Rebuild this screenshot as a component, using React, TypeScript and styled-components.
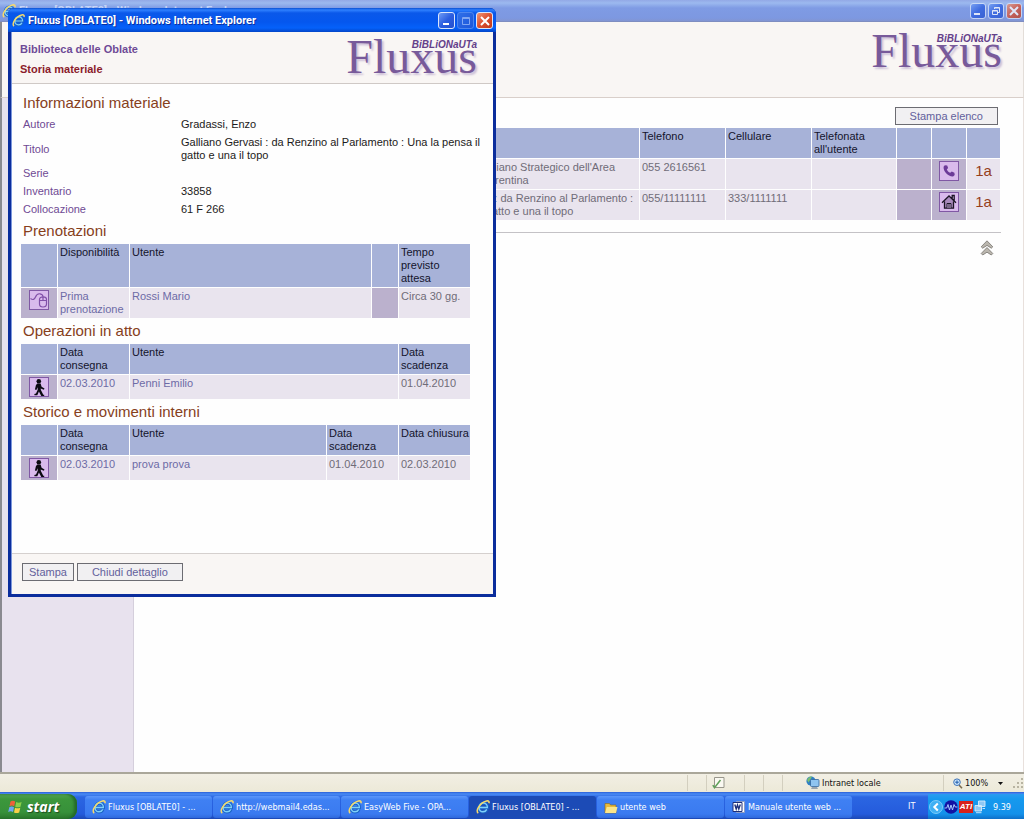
import React from 'react';
import styled, { createGlobalStyle, css } from 'styled-components';

const GlobalStyle = createGlobalStyle`
  *, *::before, *::after { box-sizing: border-box; }
  html, body { margin: 0; padding: 0; }
  body {
    font-family: "Liberation Sans", Arial, sans-serif;
    font-size: 11px;
    line-height: 13px;
    background: #fff;
    overflow: hidden;
  }
  a { color: inherit; text-decoration: none; }
  svg { display: block; flex: none; }
`;

const uiFont = '"DejaVu Sans Condensed", "DejaVu Sans", sans-serif';

/* ---------- desktop and windows ---------- */

const Desktop = styled.div`
  position: relative;
  min-height: 100vh;
  display: flex;
  flex-direction: column;
`;

const MainWindow = styled.section`
  flex: 1;
  display: flex;
  flex-direction: column;
`;

const TitleBar = styled.header<{ $active?: boolean }>`
  display: flex;
  align-items: center;
  gap: 3px;
  font-family: Roboto, "Liberation Sans", sans-serif;
  font-weight: 700;
  white-space: nowrap;
  ${(p) =>
    p.$active
      ? css`
          height: 24px;
          padding: 1px 3px 0 4px;
          color: #fff;
          border-radius: 6px 6px 0 0;
          text-shadow: 1px 1px 0 #0a2fa0;
          background: linear-gradient(#0a4fd0 0, #2f80ff 2px, #0a58ea 5px, #0557ee 14px, #0561fa 20px, #0345c8 24px);
        `
      : css`
          height: 22px;
          padding: 0 2px;
          color: #c5d3f6;
          background: linear-gradient(#93a9e6 0, #9cb9ef 3px, #7f9be4 8px, #7d98e1 18px, #8295d2 21px, #7b86b0 22px);
        `}
`;

const WindowTitle = styled.h1`
  flex: 1;
  margin: 0;
  font-size: 11px;
  line-height: 16px;
`;

const CaptionButtons = styled.div<{ $inactive?: boolean }>`
  display: flex;
  gap: 2px;
  opacity: ${(p) => (p.$inactive ? 0.75 : 1)};
`;

const CaptionButton = styled.button<{ $kind: 'blue' | 'faded' | 'red'; $size: number }>`
  width: ${(p) => p.$size}px;
  height: ${(p) => p.$size}px;
  padding: 0;
  display: flex;
  align-items: center;
  justify-content: center;
  border: 1px solid ${(p) => (p.$kind === 'faded' ? '#4d86ee' : '#dbe6fb')};
  border-radius: 3px;
  background: ${(p) =>
    ({
      blue: 'linear-gradient(135deg, #6f9bf5, #2c5ee0 50%, #2450cd)',
      faded: 'linear-gradient(135deg, #2f6fe8, #1c56da)',
      red: 'linear-gradient(135deg, #ee9576, #dc5030 50%, #c03a1c)',
    })[p.$kind]};
`;

const AppHeader = styled.div`
  display: flex;
  justify-content: flex-end;
  height: 76px;
  padding: 9px 21px 0;
  background: #f9f6f4;
  border-bottom: 1px solid #d9cfca;
  border-left: 2px solid #8a8a90;
  border-right: 1px solid #e3ddd8;
`;

const Columns = styled.div`
  flex: 1;
  display: flex;
  border-left: 2px solid #8a8a90;
  border-right: 1px solid #e8e0dc;
`;

const SideBar = styled.aside`
  width: 132px;
  flex: none;
  background: #e8e2ee;
  border-right: 1px solid #d5cfdc;
`;

const Content = styled.main`
  flex: 1;
  min-width: 0;
  padding: 9px 22px 0 8px;
  background: #fefefe;
  display: flex;
  flex-direction: column;
`;

const Actions = styled.div`
  display: flex;
  justify-content: flex-end;
  padding: 0 3px 2px;
`;

const ActionButton = styled.button<{ $wide?: boolean }>`
  height: 18px;
  padding: 0 ${(p) => (p.$wide ? 14 : 6)}px;
  border: 1px solid #6c6c72;
  background: #f1f0f2;
  color: #63619c;
  font: 11px/14px "Liberation Sans", Arial, sans-serif;
`;

const Rule = styled.hr`
  width: 100%;
  margin: 11px 0 7px;
  border: 0;
  border-top: 1px solid #c4c2c6;
`;

const TopLink = styled.a`
  align-self: flex-end;
  margin-right: 7px;
`;

/* ---------- tables ---------- */

const Grid = styled.table`
  width: 100%;
  table-layout: fixed;
  border-collapse: separate;
  border-spacing: 1px;
`;

const Head = styled.th`
  padding: 2px;
  background: #a7b2d8;
  color: #14142c;
  font-weight: 400;
  text-align: left;
  vertical-align: top;
`;

const Cell = styled.td<{ $tone?: 'grey' | 'link' | 'rank' }>`
  padding: 2px;
  background: #e9e4ee;
  vertical-align: top;
  color: ${(p) => (p.$tone === 'link' ? '#6d6ba6' : '#706c78')};
  ${(p) =>
    p.$tone === 'rank' &&
    css`
      color: #96401c;
      font-size: 15px;
      line-height: 20px;
      text-align: center;
    `}
`;

const IconCell = styled.td`
  padding: 2px;
  background: #bbb1cd;
  vertical-align: top;
  svg { margin: 0 auto; }
`;

const SectionTitle = styled.h2`
  margin: 0;
  padding-left: 3px;
  font-size: 15px;
  line-height: 24px;
  font-weight: 400;
  color: #86401c;
`;

const InfoTable = styled.table`
  width: 100%;
  border-collapse: separate;
  border-spacing: 0 1px;
  th, td { padding: 2px 3px; text-align: left; font-weight: 400; }
  th { width: 158px; color: #6f4a94; }
  td { padding-right: 0; color: #1c1a20; }
`;

/* ---------- popup ---------- */

const Popup = styled.section`
  position: absolute;
  left: 8px;
  top: 8px;
  width: 488px;
  height: 589px;
  display: flex;
  flex-direction: column;
  background: #0b2d9c;
  border-radius: 6px 6px 0 0;
`;

const PopupInner = styled.div`
  flex: 1;
  display: flex;
  flex-direction: column;
  margin: 0 3px 3px;
  border-left: 1px solid #7c98dc;
  background: #fefefe;
`;

const PopupHeader = styled.div`
  display: flex;
  justify-content: space-between;
  height: 52px;
  padding: 5px 16px 0 8px;
  background: #f9f6f4;
  border-bottom: 1px solid #cfc9c6;
`;

const Headings = styled.div`
  font-weight: 700;
  line-height: 20px;
  padding-top: 2px;
`;

const Library = styled.div`
  color: #6e4a96;
`;

const PageName = styled.div`
  color: #8b1c2c;
`;

const PopupBody = styled.div`
  flex: 1;
  padding: 7px 4px 0 8px;
`;

const Section = styled.section`
  padding-right: 18px;
`;

const PopupFooter = styled.footer`
  display: flex;
  gap: 3px;
  height: 41px;
  padding: 9px 10px;
  background: #f9f6f4;
  border-top: 1px solid #d5d0ce;
`;

const Logo = styled.div`
  position: relative;
  height: 40px;
  color: #785a9a;
  font: 48px/40px "Liberation Serif", "Times New Roman", serif;
  text-shadow: 2px 2px 2px #cdc0d8;
`;

const LogoTag = styled.span`
  position: absolute;
  right: 0;
  top: 2px;
  font: italic 700 10px/12px "Liberation Sans", Arial, sans-serif;
  color: #64408a;
  text-shadow: none;
`;

/* ---------- status bar and task bar ---------- */

const StatusBar = styled.div`
  display: flex;
  align-items: center;
  justify-content: flex-end;
  height: 20px;
  border-top: 2px solid #aaa79a;
  background: linear-gradient(#f2efe4, #ece9d8);
  color: #111;
  font: 9px/14px ${uiFont};
`;

const StatusPane = styled.div<{ $width: number; $pad?: number }>`
  display: flex;
  align-items: center;
  gap: 2px;
  width: ${(p) => p.$width}px;
  height: 16px;
  padding-left: ${(p) => p.$pad ?? 0}px;
  border-left: 1px solid #d3cfbf;
`;

const Spacer = styled.span`
  flex: 1;
`;

const TaskBar = styled.nav`
  display: flex;
  height: 27px;
  padding-top: 2px;
  background: linear-gradient(#2a5fd8 0, #4a8cf4 2px, #2b66e2 5px, #245bdc 22px, #1c48b4 27px);
  color: #fff;
  font: 9px/14px ${uiFont};
`;

const StartButton = styled.button`
  display: flex;
  align-items: center;
  gap: 4px;
  width: 77px;
  margin-right: 8px;
  padding: 0 0 0 8px;
  border: 0;
  border-radius: 0 9px 9px 0;
  color: #fff;
  font: italic 700 14px/20px "Open Sans", "Noto Sans", sans-serif;
  text-shadow: 1px 1px 1px #1e4d1e;
  background: linear-gradient(#56a556 0, #3c973c 5px, #37913a 18px, #2a762c 25px);
  box-shadow: inset -3px 0 3px #246a28;
`;

const Tasks = styled.div`
  display: flex;
  flex: 1;
  gap: 1px;
`;

const Task = styled.button<{ $active?: boolean }>`
  display: flex;
  align-items: center;
  gap: 2px;
  width: 127px;
  height: 22px;
  margin-top: 2px;
  padding: 0 0 0 7px;
  border: 0;
  border-radius: 3px;
  color: #fff;
  font: 9px/14px ${uiFont};
  white-space: nowrap;
  background: ${(p) =>
    p.$active ? '#1c4bb6' : 'linear-gradient(#5b96fa 0, #3f80f3 4px, #3a7af0 18px, #3069dc 22px)'};
`;

const Language = styled.div`
  width: 20px;
  line-height: 25px;
`;

const Tray = styled.div`
  display: flex;
  align-items: center;
  gap: 1px;
  width: 96px;
  padding: 0 0 0 1px;
  background: linear-gradient(#2a9cf0 0, #1699ee 5px, #1491ea 20px, #0f6fc8 25px);
`;

const Clock = styled.time`
  margin-left: 6px;
`;

/* ---------- drawings ---------- */

const IeIcon = ({ size = 14 }: { size?: number }) => (
  <svg width={size} height={size} viewBox="0 0 16 16" fill="none">
    <path d="M4 8.800h9c.2-3.200-1.700-5.200-4.400-5.200-2.900 0-4.900 2.300-5 5.200-.1 3 1.700 4.800 4.400 4.800 2 0 3.500-.9 4.400-2.700" stroke="#1a63c4" strokeWidth="3.600" />
    <path d="M4 8.600h9c.2-3-1.700-5-4.400-5-2.900 0-4.900 2.300-5 5.200-.1 3 1.700 4.600 4.400 4.600 2 0 3.500-.9 4.300-2.700" stroke="#7fd0fa" strokeWidth="1.500" />
    <path d="M2.600 15C-1 13 4 3.300 12 1.200c2.400-.6 3.400.5 2.700 2.500" stroke="#f6d96c" strokeWidth="1.800" />
  </svg>
);

const MinimizeGlyph = () => (
  <svg width="12" height="12" viewBox="0 0 12 12">
    <path d="M2 8h6v2H2z" fill="#fff" />
  </svg>
);

const MaximizeGlyph = () => (
  <svg width="12" height="12" viewBox="0 0 12 12" fill="none" stroke="#80a6f2">
    <path d="M2.500 2.500h7v7h-7zM2.500 3.500h7" />
  </svg>
);

const RestoreGlyph = () => (
  <svg width="12" height="12" viewBox="0 0 12 12" fill="none" stroke="#fff">
    <path d="M4.500 4V2.500h5v5H8M4.500 3h5" />
    <path d="M2.500 5.500h5v4h-5zM2.500 6h5" />
  </svg>
);

const CloseGlyph = () => (
  <svg width="12" height="12" viewBox="0 0 12 12" stroke="#fff" strokeWidth="2">
    <path d="M2 2l8 8M10 2l-8 8" />
  </svg>
);

const IconFrame = ({ children }: { children: React.ReactNode }) => (
  <svg width="20" height="20" viewBox="0 0 20 20">
    <rect x=".5" y=".5" width="19" height="19" fill="#d9baec" stroke="#8058a4" />
    {children}
  </svg>
);

const MouseIcon = () => (
  <IconFrame>
    <g fill="none" stroke="#8150a8" strokeWidth="1.200">
      <path d="M1.500 8.500c2.500 1.800 4 1 5-1.500S9 3.500 11 3.800c2 .3 3 1 3 3" />
      <path d="M10.500 9.500c0-3.600 7-3.600 7 0v4.500c0 4-7 4-7 0zM10.500 10.500h7M14 6.800v3.700" />
    </g>
  </IconFrame>
);

const WalkIcon = () => (
  <IconFrame>
    <circle cx="9.800" cy="4.300" r="2.300" fill="#0c0a12" />
    <path d="M8.200 6.600h3.400l1 3.200 2.900 1.700-.6 1.200-3.200-1.300.2 1.700 2.400 4.600h.9v1.200h-2.900l-2.400-4.400-1.600 3.800-2.800-.1-.2-1.200 1.700-.4 1.700-3.800-.1-2.600-1.200 2.800-1.500-.4 1-4.400z" fill="#0c0a12" />
  </IconFrame>
);

const PhoneIcon = () => (
  <IconFrame>
    <path d="M5.800 4.200l2.400.2.900 2.600-1.300 1.400c.7 1.500 1.700 2.600 3.400 3.400l1.600-1.200 2.600 1.100.3 2.200-1.600 1.500C9.300 15.800 4.100 10.500 4.600 5.800z" fill="#6c3a98" />
  </IconFrame>
);

const HouseIcon = () => (
  <IconFrame>
    <path d="M5 9.500L10 4.500l5 5v6.700H5z" fill="#a98abd" />
    <path d="M3 10.800L10 4l7 6.800M5.500 9.500v6.700h9V9.500M13.200 7V3.500h2V9" fill="none" stroke="#1b1424" strokeWidth="1.300" />
    <path d="M8 16v-4.500h4V16M10 11.500V16" fill="#d9baec" stroke="#1b1424" />
  </IconFrame>
);

const TopIcon = () => (
  <svg width="14" height="16" viewBox="0 0 14 16" fill="#bab6ae" stroke="#77736e" strokeWidth=".8">
    <path d="M7 .8l5.800 6-1.500 1.400L7 5.400 2.700 8.200 1.200 6.800z" />
    <path d="M7 7.500l5.800 6-1.500 1.500L7 12.200 2.700 15l-1.500-1.500z" />
  </svg>
);

const WindowsFlag = () => (
  <svg width="15" height="14" viewBox="0 0 15 14">
    <path d="M2.500 1.500Q5 0 7.200 1.600L6.200 6.300Q4 5 1.500 6.200z" fill="#f0603a" />
    <path d="M8.200 2Q10.600 3.400 13.600 2L12.500 6.700Q9.800 8 7.200 6.700z" fill="#8cd04a" />
    <path d="M1.300 7.200Q3.800 6 6 7.300L5 12Q2.800 10.600.2 12z" fill="#6fa4f4" />
    <path d="M7 7.700Q9.500 9 12.300 7.700L11.200 12.400Q8.500 13.600 6 12.400z" fill="#f8d048" />
  </svg>
);

const FolderIcon = () => (
  <svg width="14" height="13" viewBox="0 0 14 13">
    <path d="M1 2.500h4.500l1 1.500H12v8H1z" fill="#e8b93c" stroke="#8a6a18" strokeWidth=".6" />
    <path d="M1 12l1.800-6h10.700L12 12z" fill="#fbe58a" />
  </svg>
);

const WordIcon = () => (
  <svg width="14" height="14" viewBox="0 0 14 14" fill="none">
    <path d="M4.500 1.500h8v11h-8z" fill="#fff" stroke="#8b9bc4" />
    <path d="M1 2.500h9v9H1z" fill="#fff" stroke="#1e2f7a" />
    <path d="M2.800 4.500L4.200 9l1.300-4 1.300 4 1.500-4.500" stroke="#1e2f7a" strokeWidth="1.400" />
  </svg>
);

const PageCheckIcon = () => (
  <svg width="13" height="12" viewBox="0 0 13 12" fill="none">
    <path d="M2.500.5h9.500v10H2.500z" fill="#faf9f2" stroke="#98968c" />
    <path d="M.8 8.200l1.700 2.500L8.500 3" stroke="#5fa05a" strokeWidth="1.500" />
  </svg>
);

const IntranetIcon = () => (
  <svg width="14" height="14" viewBox="0 0 14 14">
    <circle cx="5" cy="5" r="4.600" fill="#2f7fc4" />
    <path d="M1 4q2-4 5-3.500Q5 3 2.500 6.500z" fill="#79c070" />
    <rect x="4.500" y="3.500" width="8.500" height="7" rx="1" fill="#8fc4f0" stroke="#33669c" strokeWidth=".8" />
    <path d="M6 11h5l1 2H5z" fill="#9aa5ae" />
  </svg>
);

const MagnifierIcon = () => (
  <svg width="10" height="11" viewBox="0 0 10 11" fill="none">
    <path d="M6 7l3 3.300" stroke="#7b6a4c" strokeWidth="1.600" />
    <circle cx="4" cy="4.200" r="3.300" fill="#cfe6fb" stroke="#3c72b8" />
    <path d="M2.200 4.200h3.600M4 2.400V6" stroke="#1d5cac" />
  </svg>
);

const ArrowDown = () => (
  <svg width="5" height="3" viewBox="0 0 5 3">
    <path d="M0 0h5L2.500 3z" fill="#111" />
  </svg>
);

const GripIcon = () => (
  <svg width="11" height="11" viewBox="0 0 11 11" fill="#b8b4a2">
    <path d="M8 0h2v2H8zM8 4h2v2H8zM8 8h2v2H8zM4 4h2v2H4zM4 8h2v2H4zM0 8h2v2H0z" />
  </svg>
);

const ChevronIcon = () => (
  <svg width="14" height="16" viewBox="0 0 14 16" fill="none">
    <circle cx="7" cy="8" r="6.500" fill="#3fb0f4" stroke="#8fd6fb" strokeWidth=".8" />
    <path d="M8.800 4.500L5.300 8l3.500 3.500" stroke="#fff" strokeWidth="2" />
  </svg>
);

const WaveIcon = () => (
  <svg width="14" height="14" viewBox="0 0 14 14" fill="none">
    <circle cx="7" cy="7" r="6.800" fill="#1212a4" />
    <path d="M.5 8h2.200L4 4.500 5.500 10 7 5l1.500 5L10 4.500 11.300 7h2.200" stroke="#a6c8ff" />
  </svg>
);

const AtiBadge = styled.span`
  width: 14px;
  height: 12px;
  background: #d8221c;
  color: #fff;
  font: italic 700 8px/12px "Liberation Sans", Arial, sans-serif;
  text-align: center;
`;

const NetworkIcon = () => (
  <svg width="12" height="14" viewBox="0 0 12 14" fill="#8fc8f4" stroke="#d8ecfb" strokeWidth=".9">
    <path d="M4.500 1h6.500v5.500H4.500zM1 5.500h6.500V11H1z" />
    <path d="M2 12.700h5.500M8.500 8.500H11" />
  </svg>
);

/* ---------- composed parts ---------- */

const Brand = () => (
  <Logo>
    Fluxus
    <LogoTag>BiBLiONaUTa</LogoTag>
  </Logo>
);

const WINDOW_TITLE = 'Fluxus [OBLATE0] - Windows Internet Explorer';

const requests = [
  { title: "Relazione per il Piano Strategico dell'Area Metropolitana Fiorentina", phone: '055 2616561', mobile: '', icon: <PhoneIcon /> },
  { title: 'Galliano Gervasi : da Renzino al Parlamento : Una la pensa il gatto e una il topo', phone: '055/11111111', mobile: '333/1111111', icon: <HouseIcon /> },
];

const details = [
  ['Autore', 'Gradassi, Enzo'],
  ['Titolo', 'Galliano Gervasi : da Renzino al Parlamento : Una la pensa il gatto e una il topo'],
  ['Serie', ''],
  ['Inventario', '33858'],
  ['Collocazione', '61 F 266'],
];

const tasks = [
  { label: 'Fluxus [OBLATE0] - ...', icon: <IeIcon /> },
  { label: 'http://webmail4.edas...', icon: <IeIcon /> },
  { label: 'EasyWeb Five - OPA...', icon: <IeIcon /> },
  { label: 'Fluxus [OBLATE0] - ...', icon: <IeIcon />, active: true },
  { label: 'utente web', icon: <FolderIcon /> },
  { label: 'Manuale utente web ...', icon: <WordIcon /> },
];

const Cols = ({ widths }: { widths: (number | undefined)[] }) => (
  <colgroup>
    {widths.map((w, i) => (
      <col key={i} width={w} />
    ))}
  </colgroup>
);

const HeadRow = ({ labels }: { labels: string[] }) => (
  <thead>
    <tr>
      {labels.map((label, i) => (
        <Head key={i} scope="col">{label}</Head>
      ))}
    </tr>
  </thead>
);

const RequestList = () => (
  <Grid>
    <Cols widths={[undefined, 231, 85, 85, 84, 34, 34, 33]} />
    <HeadRow labels={['', '', 'Telefono', 'Cellulare', "Telefonata all'utente", '', '', '']} />
    <tbody>
      {requests.map((r) => (
        <tr key={r.phone}>
          <Cell />
          <Cell>{r.title}</Cell>
          <Cell>{r.phone}</Cell>
          <Cell>{r.mobile}</Cell>
          <Cell />
          <IconCell />
          <IconCell>{r.icon}</IconCell>
          <Cell $tone="rank">1a</Cell>
        </tr>
      ))}
    </tbody>
  </Grid>
);

const DetailWindow = () => (
  <Popup>
    <TitleBar $active>
      <IeIcon size={13} />
      <WindowTitle>{WINDOW_TITLE}</WindowTitle>
      <CaptionButtons>
        <CaptionButton $kind="blue" $size={17} aria-label="Riduci a icona"><MinimizeGlyph /></CaptionButton>
        <CaptionButton $kind="faded" $size={17} aria-label="Ingrandisci"><MaximizeGlyph /></CaptionButton>
        <CaptionButton $kind="red" $size={17} aria-label="Chiudi"><CloseGlyph /></CaptionButton>
      </CaptionButtons>
    </TitleBar>
    <PopupInner>
      <PopupHeader>
        <Headings>
          <Library>Biblioteca delle Oblate</Library>
          <PageName>Storia materiale</PageName>
        </Headings>
        <Brand />
      </PopupHeader>
      <PopupBody>
        <SectionTitle>Informazioni materiale</SectionTitle>
        <InfoTable>
          <tbody>
            {details.map(([name, value]) => (
              <tr key={name}>
                <th scope="row">{name}</th>
                <td>{value}</td>
              </tr>
            ))}
          </tbody>
        </InfoTable>
        <Section>
          <SectionTitle>Prenotazioni</SectionTitle>
          <Grid>
            <Cols widths={[36, 71, undefined, 26, 71]} />
            <HeadRow labels={['', 'Disponibilità', 'Utente', '', 'Tempo previsto attesa']} />
            <tbody>
              <tr>
                <IconCell><MouseIcon /></IconCell>
                <Cell $tone="link"><a href="#prenotazione">Prima prenotazione</a></Cell>
                <Cell $tone="link"><a href="#rossi">Rossi Mario</a></Cell>
                <IconCell />
                <Cell>Circa 30 gg.</Cell>
              </tr>
            </tbody>
          </Grid>
        </Section>
        <Section>
          <SectionTitle>Operazioni in atto</SectionTitle>
          <Grid>
            <Cols widths={[36, 71, undefined, 71]} />
            <HeadRow labels={['', 'Data consegna', 'Utente', 'Data scadenza']} />
            <tbody>
              <tr>
                <IconCell><WalkIcon /></IconCell>
                <Cell $tone="link"><a href="#consegna">02.03.2010</a></Cell>
                <Cell $tone="link"><a href="#penni">Penni Emilio</a></Cell>
                <Cell>01.04.2010</Cell>
              </tr>
            </tbody>
          </Grid>
        </Section>
        <Section>
          <SectionTitle>Storico e movimenti interni</SectionTitle>
          <Grid>
            <Cols widths={[36, 71, undefined, 71, 71]} />
            <HeadRow labels={['', 'Data consegna', 'Utente', 'Data scadenza', 'Data\u00a0chiusura']} />
            <tbody>
              <tr>
                <IconCell><WalkIcon /></IconCell>
                <Cell $tone="link"><a href="#storico">02.03.2010</a></Cell>
                <Cell $tone="link"><a href="#prova">prova prova</a></Cell>
                <Cell>01.04.2010</Cell>
                <Cell>02.03.2010</Cell>
              </tr>
            </tbody>
          </Grid>
        </Section>
      </PopupBody>
      <PopupFooter>
        <ActionButton>Stampa</ActionButton>
        <ActionButton $wide>Chiudi dettaglio</ActionButton>
      </PopupFooter>
    </PopupInner>
  </Popup>
);

export default function App() {
  return (
    <Desktop>
      <GlobalStyle />
      <MainWindow>
        <TitleBar>
          <IeIcon />
          <WindowTitle>{WINDOW_TITLE}</WindowTitle>
          <CaptionButtons $inactive>
            <CaptionButton $kind="blue" $size={16} aria-label="Riduci a icona"><MinimizeGlyph /></CaptionButton>
            <CaptionButton $kind="blue" $size={16} aria-label="Ripristina"><RestoreGlyph /></CaptionButton>
            <CaptionButton $kind="red" $size={16} aria-label="Chiudi"><CloseGlyph /></CaptionButton>
          </CaptionButtons>
        </TitleBar>
        <AppHeader>
          <Brand />
        </AppHeader>
        <Columns>
          <SideBar />
          <Content>
            <Actions>
              <ActionButton $wide>Stampa elenco</ActionButton>
            </Actions>
            <RequestList />
            <Rule />
            <TopLink href="#top" aria-label="Torna su"><TopIcon /></TopLink>
          </Content>
        </Columns>
        <StatusBar>
          <StatusPane $width={19} />
          <StatusPane $width={38} $pad={5}><PageCheckIcon /></StatusPane>
          <StatusPane $width={19} />
          <StatusPane $width={19} />
          <StatusPane $width={161} $pad={23}><IntranetIcon />Intranet locale</StatusPane>
          <StatusPane $width={81} $pad={9}>
            <MagnifierIcon />
            100%
            <Spacer />
            <ArrowDown />
            <Spacer />
            <GripIcon />
          </StatusPane>
        </StatusBar>
      </MainWindow>
      <TaskBar>
        <StartButton><WindowsFlag />start</StartButton>
        <Tasks>
          {tasks.map((t, i) => (
            <Task key={i} $active={t.active}>{t.icon}{t.label}</Task>
          ))}
        </Tasks>
        <Language>IT</Language>
        <Tray>
          <ChevronIcon />
          <WaveIcon />
          <AtiBadge>ATI</AtiBadge>
          <NetworkIcon />
          <Clock>9.39</Clock>
        </Tray>
      </TaskBar>
      <DetailWindow />
    </Desktop>
  );
}
